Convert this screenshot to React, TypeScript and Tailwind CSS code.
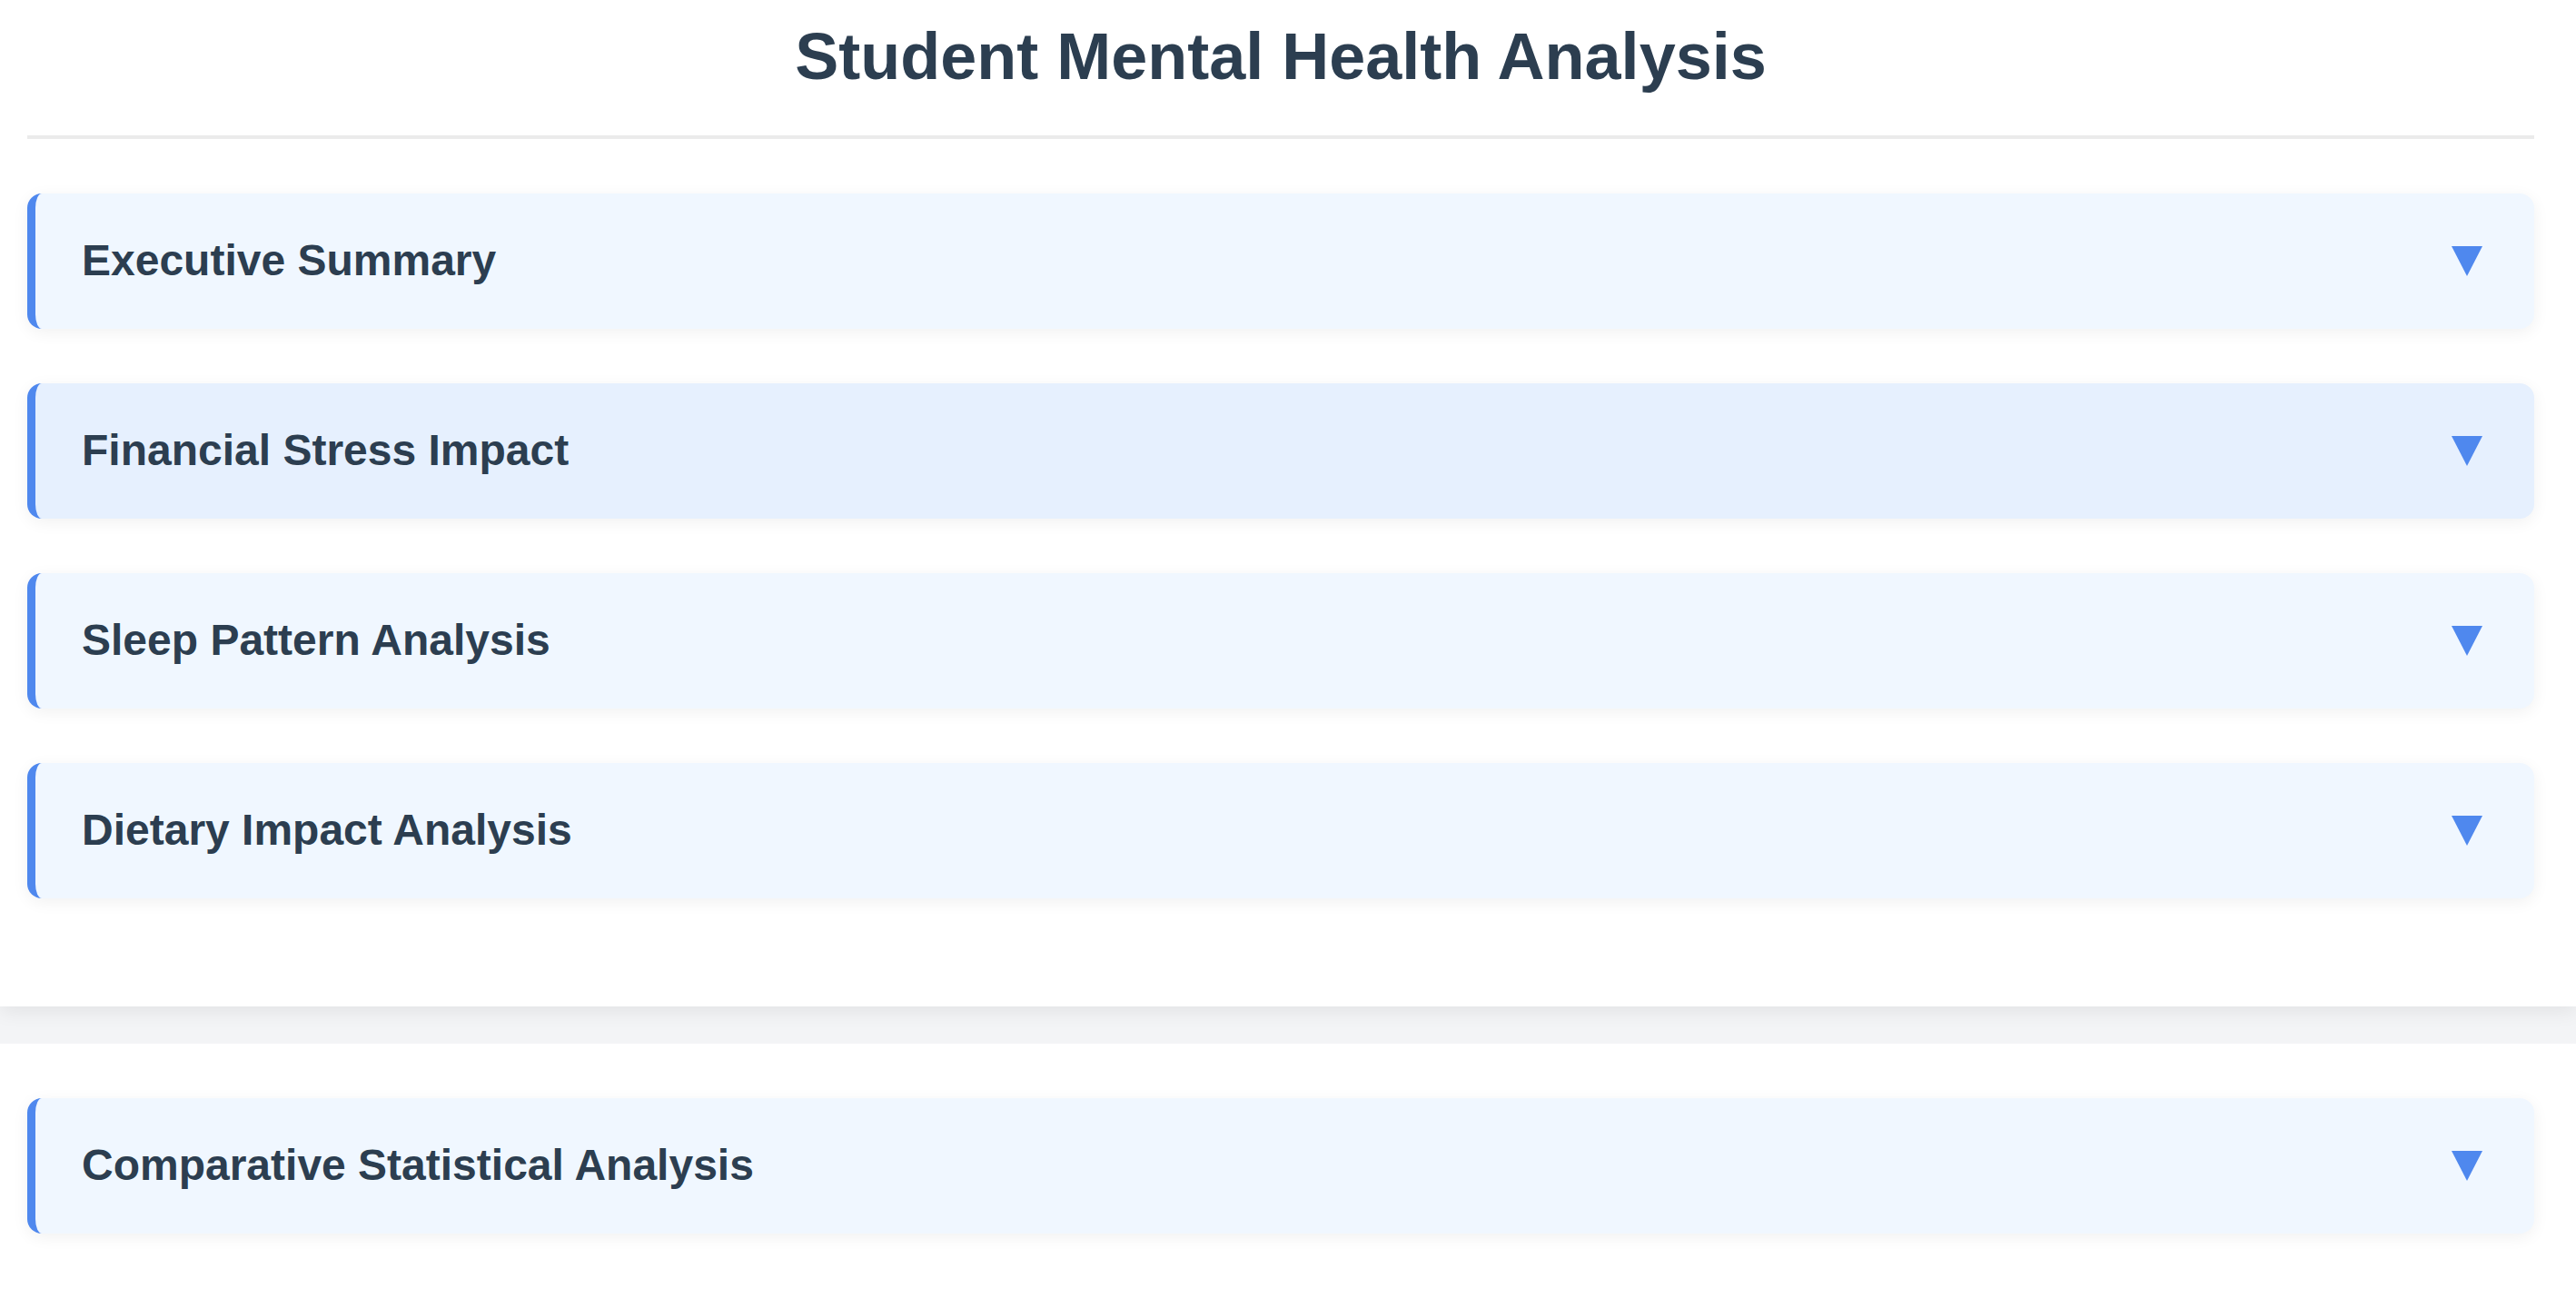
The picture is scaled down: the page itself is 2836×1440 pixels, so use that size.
import React from 'react';

type Section = { title: string; active?: boolean };

const topSections: Section[] = [
  { title: 'Executive Summary' },
  { title: 'Financial Stress Impact', active: true },
  { title: 'Sleep Pattern Analysis' },
  { title: 'Dietary Impact Analysis' },
];

function Caret() {
  return (
    <svg width="34" height="33" viewBox="0 0 34 33" className="shrink-0">
      <polygon points="0,0 34,0 17,33" fill="#4f88ee" />
    </svg>
  );
}

function SectionHeader({ title, active }: Section) {
  return (
    <div
      className={`flex h-[149px] items-center justify-between rounded-[16px] border-l-[9px] border-[#4f88ee] pl-[51px] pr-[57px] shadow-[0_4px_18px_rgba(0,0,0,0.06)] ${
        active ? 'bg-[#e6f0fe]' : 'bg-[#f0f7ff]'
      }`}
    >
      <h2 className="pb-[1px] text-[48px] font-bold text-[#2c3e50]">{title}</h2>
      <Caret />
    </div>
  );
}

export default function App() {
  return (
    <div className="min-h-screen bg-[#f3f4f6] font-['Liberation_Sans',Arial,sans-serif]">
      {/* Main report panel */}
      <div className="relative z-10 bg-white pb-[119px] pl-[30px] pr-[46px] pt-[21px] shadow-[0_6px_20px_rgba(0,0,0,0.07)]">
        <header className="border-b-4 border-[#ebebeb] pb-[45px] text-center">
          <h1 className="text-[72px] font-bold leading-[83px] text-[#2c3e50]">
            Student Mental Health Analysis
          </h1>
        </header>
        <div className="mt-[60px] flex flex-col gap-[60px]">
          {topSections.map((s) => (
            <SectionHeader key={s.title} {...s} />
          ))}
        </div>
      </div>

      {/* Comparison panel */}
      <div className="mt-[41px] min-h-[291px] bg-white pb-[60px] pl-[30px] pr-[46px] pt-[60px]">
        <SectionHeader title="Comparative Statistical Analysis" />
      </div>
    </div>
  );
}
